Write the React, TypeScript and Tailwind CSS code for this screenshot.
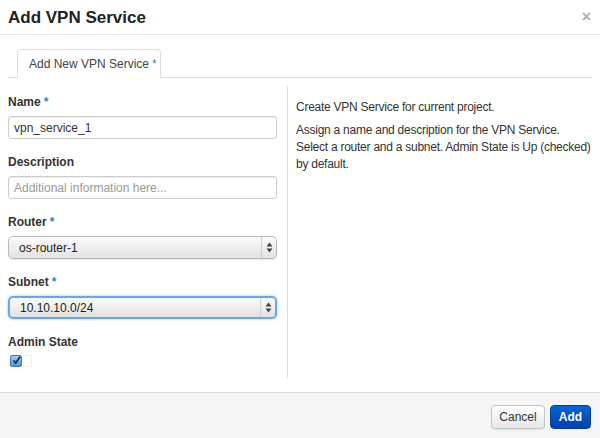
import React from "react";

function Arrows() {
  return (
    <svg width="7" height="11" viewBox="0 0 7 11" className="block">
      <path d="M3.5 0.5 L6.5 4.5 L0.5 4.5 Z" fill="#444" />
      <path d="M3.5 10.5 L6.5 6.5 L0.5 6.5 Z" fill="#444" />
    </svg>
  );
}

function Select({ value, focused }: { value: string; focused?: boolean }) {
  return (
    <div
      className={
        "flex h-[23px] w-[269px] items-stretch rounded-[5px] bg-gradient-to-b from-[#fbfbfb] to-[#e2e2e2] " +
        (focused
          ? "border-2 border-[#6aa8de] shadow-[0_0_3px_rgba(82,168,236,0.7)]"
          : "border border-[#b9b9b9] shadow-[0_1px_1px_rgba(0,0,0,0.12)]")
      }
    >
      <div className="flex flex-1 items-center pl-[10px] text-[12px] text-[#222]">{value}</div>
      <div className="flex w-[15px] items-center justify-center border-l border-[#cfcfcf]">
        <Arrows />
      </div>
    </div>
  );
}

function Label({ text, req }: { text: string; req?: boolean }) {
  return (
    <div className="mb-[5px] h-[18px] text-[12px] font-bold leading-[18px] text-[#333]">
      {text}
      {req && <span className="ml-[3px] text-[#3a87ad]">*</span>}
    </div>
  );
}

export default function App() {
  return (
    <div
      className="h-[438px] w-[600px] overflow-hidden bg-white text-[#333]"
      style={{ fontFamily: '"Liberation Sans", Arial, Helvetica, sans-serif' }}
    >
      {/* header */}
      <div className="flex h-[35px] items-center justify-between border-b border-[#e5e5e5] pl-[8px] pr-[9px]">
        <div className="text-[17px] font-bold leading-none text-[#222]">Add VPN Service</div>
        <div className="text-[16px] font-bold leading-none text-[#b0b0b0]">×</div>
      </div>

      {/* tabs */}
      <div className="px-[8px] pt-[14px]">
        <div className="flex border-b border-[#dddddd]">
          <div className="relative -mb-px ml-[9px] flex h-[29px] w-[144px] items-center rounded-t-[4px] border border-[#dddddd] border-b-white bg-white pl-[11px] text-[12px] text-[#444]">
            Add New VPN Service<span className="ml-[3px] text-[#3a87ad]">*</span>
          </div>
        </div>
      </div>

      {/* body */}
      <div className="mt-[8px] flex h-[292px] px-[8px]">
        <div className="w-[279px] shrink-0 pt-[7px]">
          <div className="mb-[14px]">
            <Label text="Name" req />
            <div className="flex h-[23px] w-[269px] items-center rounded-[3px] border border-[#cccccc] pl-[5px] text-[12px] text-[#333] shadow-[inset_0_1px_1px_rgba(0,0,0,0.075)]">
              vpn_service_1
            </div>
          </div>
          <div className="mb-[14px]">
            <Label text="Description" />
            <div className="flex h-[23px] w-[269px] items-center rounded-[3px] border border-[#cccccc] pl-[5px] text-[12px] text-[#999] shadow-[inset_0_1px_1px_rgba(0,0,0,0.075)]">
              Additional information here...
            </div>
          </div>
          <div className="mb-[14px]">
            <Label text="Router" req />
            <Select value="os-router-1" />
          </div>
          <div className="mb-[14px]">
            <Label text="Subnet" req />
            <Select value="10.10.10.0/24" focused />
          </div>
          <div>
            <div className="h-[18px] text-[12px] font-bold leading-[18px] text-[#333]">Admin State</div>
            <div className="mt-[4px] flex items-center">
              <div className="ml-[2px] flex h-[12px] w-[12px] items-center justify-center rounded-[2px] border border-[#3d77b8] bg-gradient-to-b from-[#9fcdf3] to-[#4d94da]">
                <svg width="11" height="11" viewBox="0 0 11 11" className="-mt-[2px] ml-[1px]">
                  <path d="M2 5.5 L4.5 8.5 L10 1" stroke="#0c1f3a" strokeWidth="2" fill="none" />
                </svg>
              </div>
              <div className="ml-[1px] h-[12px] w-[9px] border-y border-r border-[#f0f0f0]" />
            </div>
          </div>
        </div>
        <div className="min-w-0 flex-1 whitespace-nowrap border-l border-[#dddddd] pl-[8px] pt-[13px] text-[12px] tracking-[-0.25px] text-[#333]">
          <p className="leading-[17px]">Create VPN Service for current project.</p>
          <p className="mt-[6px] leading-[17px]">
            Assign a name and description for the VPN Service.
            <br />
            Select a router and a subnet. Admin State is Up (checked)
            <br />
            by default.
          </p>
        </div>
      </div>

      {/* footer */}
      <div className="mt-[14px] flex h-[46px] items-start justify-end gap-[5px] border-t border-[#dddddd] bg-[#f5f5f5] pr-[9px] pt-[12px]">
        <div className="flex h-[24px] w-[54px] items-center justify-center rounded-[4px] border border-[#c5c5c5] bg-gradient-to-b from-white to-[#e6e6e6] text-[12px] text-[#333] shadow-[0_1px_1px_rgba(0,0,0,0.08)]">
          Cancel
        </div>
        <div className="flex h-[24px] w-[41px] items-center justify-center rounded-[4px] border border-[#0a3c9a] bg-gradient-to-b from-[#0b63d3] to-[#0041ad] text-[12px] font-bold text-white">
          Add
        </div>
      </div>
    </div>
  );
}
